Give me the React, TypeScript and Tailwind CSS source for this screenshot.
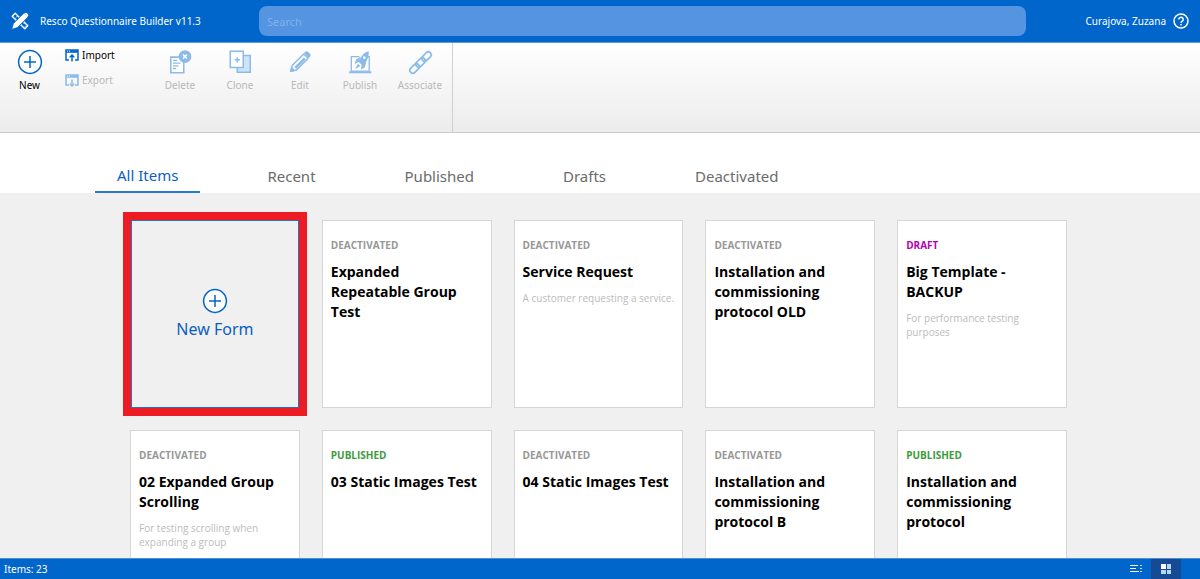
import type { ReactNode } from "react";
import { clsx } from "clsx";

type Status = "DEACTIVATED" | "DRAFT" | "PUBLISHED";

interface FormItem {
  status: Status;
  title: string;
  description?: string;
}

const TABS = ["All Items", "Recent", "Published", "Drafts", "Deactivated"];

const FORMS: FormItem[] = [
  { status: "DEACTIVATED", title: "Expanded Repeatable Group Test" },
  { status: "DEACTIVATED", title: "Service Request", description: "A customer requesting a service." },
  { status: "DEACTIVATED", title: "Installation and commissioning protocol OLD" },
  { status: "DRAFT", title: "Big Template - BACKUP", description: "For performance testing purposes" },
  {
    status: "DEACTIVATED",
    title: "02 Expanded Group Scrolling",
    description: "For testing scrolling when expanding a group",
  },
  { status: "PUBLISHED", title: "03 Static Images Test" },
  { status: "DEACTIVATED", title: "04 Static Images Test" },
  { status: "DEACTIVATED", title: "Installation and commissioning protocol B" },
  { status: "PUBLISHED", title: "Installation and commissioning protocol" },
];

const STATUS_COLORS: Record<Status, string> = {
  DEACTIVATED: "text-[#979797]",
  DRAFT: "text-[#b800b0]",
  PUBLISHED: "text-[#3c9a3c]",
};

function LogoIcon() {
  return (
    <svg width="18" height="18" viewBox="0 0 18 18" fill="none" aria-hidden="true">
      <path d="M4.2 1.2 1.2 4.2l12.6 12.6 3-3z" stroke="#fff" strokeWidth="1.4" strokeLinejoin="round" />
      <path d="m5.6 4.8 1-1M4 6.6l1-1M12.6 12l1-1M14 14.6l1-1" stroke="#fff" />
      <path d="M13 1 2.4 11.6.6 17.4l5.8-1.800L17 5z" fill="#fff" stroke="#0066cc" strokeWidth="0.8" />
      <path d="M13.2 1.4a2.500 2.500 0 0 1 3.500 3.500z" fill="#fff" />
    </svg>
  );
}

function HelpIcon() {
  return (
    <svg width="16" height="16" viewBox="0 0 16 16" fill="none" stroke="#fff" aria-hidden="true">
      <circle cx="8" cy="8" r="7" strokeWidth="1.5" />
      <path d="M5.8 6.4a2.2 2.2 0 1 1 3.5 1.8C8.5 8.8 8 9.2 8 10" strokeWidth="1.5" />
      <path d="M8 11v1.6" strokeWidth="1.5" />
    </svg>
  );
}

function PlusCircleIcon() {
  return (
    <svg width="26" height="26" viewBox="0 0 26 26" fill="none" stroke="#0066cc" aria-hidden="true">
      <circle cx="13" cy="13" r="11.4" strokeWidth="1.5" fill="#fff" />
      <path d="M13 7v12M7 13h12" strokeWidth="1.5" />
    </svg>
  );
}

function TransferIcon({ down = false }: { down?: boolean }) {
  const color = down ? "#8bbbea" : "#0066cc";
  return (
    <svg width="14" height="13" viewBox="0 0 14 13" fill="none" stroke={color} aria-hidden="true">
      <path d="M4 11H1V1h12v10h-3" strokeWidth="1.5" />
      <path d="M1 2.5h12" strokeWidth="2.6" />
      <path d="M2 2.2h1M4 2.2h1" stroke="#fff" strokeWidth="0.9" />
      {down ? (
        <path d="M7 5.5V12M4.8 9.8 7 12l2.2-2.2" strokeWidth="1.5" />
      ) : (
        <path d="M7 12.5V6M4.8 8.2 7 6l2.2 2.2" strokeWidth="1.5" />
      )}
    </svg>
  );
}

function RibbonIcon({ children }: { children: ReactNode }) {
  return (
    <svg width="26" height="26" viewBox="0 0 24 24" fill="none" stroke="#8bbbea" strokeWidth="1.4" aria-hidden="true">
      {children}
    </svg>
  );
}

const RIBBON_ACTIONS = [
  {
    label: "Delete",
    icon: (
      <>
        <path d="M3.5 7.5h12V22h-12z" fill="#fff" />
        <path d="M5.5 10.5h4M5.5 13h7M5.5 15.5h5M5.5 18h3" strokeWidth="1.2" />
        <circle cx="16.6" cy="7" r="5.2" fill="#8bbbea" />
        <path d="m14.8 5.2 3.6 3.6m0-3.6-3.6 3.6" stroke="#fff" strokeWidth="1.5" />
      </>
    ),
  },
  {
    label: "Clone",
    icon: (
      <>
        <path d="M9.5 6h12v15.5h-12z" fill="#cfe3f7" />
        <path d="M3 2h12v15H3z" fill="#fff" />
        <path d="M9.5 7.5v5M7 10h5" />
      </>
    ),
  },
  {
    label: "Edit",
    icon: (
      <>
        <path d="m3.500 20.500 1.300-5.200L15.500 4.600l4 4L8.800 19.300z" fill="#fff" strokeLinejoin="round" />
        <path d="m6.800 16.600 8.800-8.800 1.700 1.700-8.800 8.800z" fill="#8bbbea" stroke="none" />
        <path d="m3.500 20.500.8-3 2.200 2.200z" fill="#8bbbea" />
        <path d="m15.600 3.800 1.600-1.400q1.200-.8 2.200.1l2 2q.9 1 .1 2.200l-1.400 1.600z" fill="#8bbbea" stroke="none" />
      </>
    ),
  },
  {
    label: "Publish",
    icon: (
      <>
        <path d="M11.5 7H4v13.500h16.500V7h-2" fill="#fff" strokeWidth="1.2" />
        <path d="M2 21.500h20.500" strokeWidth="1.8" />
        <path d="M20 2c-4 .8-7.500 4.800-9.300 10l3.600 3.200C18 12.500 20.500 7.500 20 2z" fill="#8bbbea" stroke="none" />
        <path d="m12.600 7.200-4.200 2.500L7 14l4-2.200zM18 11.600l-1.600 5.200-3.500 2.400.6-4.700zM10 13.500l2.300 2.200-4.800 3z" fill="#8bbbea" stroke="none" />
        <circle cx="16" cy="8" r="1.2" fill="#fff" stroke="none" />
      </>
    ),
  },
  {
    label: "Associate",
    icon: (
      <g strokeWidth="1.6">
        <rect x="-5" y="-2.7" width="10" height="5.4" rx="2.7" transform="translate(7 18) rotate(-45)" />
        <rect x="-5" y="-2.7" width="10" height="5.4" rx="2.7" transform="translate(12.500 12.500) rotate(-45)" />
        <rect x="-5" y="-2.7" width="10" height="5.4" rx="2.7" transform="translate(18 7) rotate(-45)" />
      </g>
    ),
  },
];

function Header() {
  return (
    <header className="flex h-[43px] shrink-0 items-center border-b border-[#5b9ee0] bg-[#0066cc] text-white">
      <div className="flex w-[259px] shrink-0 items-center gap-[11px] pl-[11px]">
        <LogoIcon />
        <h1 className="text-[10px] whitespace-nowrap">Resco Questionnaire Builder v11.3</h1>
      </div>
      <input
        type="search"
        aria-label="Search"
        placeholder="Search"
        className="h-[30px] min-w-0 flex-1 rounded-lg bg-[#5494e0] px-2 text-[11px] text-white outline-none placeholder:text-[#7fb2ee]"
      />
      <div className="flex w-[174px] shrink-0 items-center justify-end gap-[7px] pr-[11px]">
        <span className="text-[10px]">Curajova, Zuzana</span>
        <button type="button" aria-label="Help">
          <HelpIcon />
        </button>
      </div>
    </header>
  );
}

function Ribbon() {
  return (
    <div className="flex h-[90px] shrink-0 border-b border-[#cccccc] bg-linear-to-b from-white to-[#ececec] text-[10px]">
      <button type="button" className="flex w-[59px] flex-col items-center pt-1.5">
        <PlusCircleIcon />
        <span className="leading-5">New</span>
      </button>
      <div className="flex w-[91px] flex-col items-start gap-[9px] pt-1 pl-1.5">
        <button type="button" className="flex items-center gap-[3px] leading-4">
          <TransferIcon />
          Import
        </button>
        <button type="button" disabled className="flex items-center gap-[3px] leading-4 text-[#b8b8b8]">
          <TransferIcon down />
          Export
        </button>
      </div>
      <div className="flex border-r border-[#d0d0d0] pr-0.5">
        {RIBBON_ACTIONS.map(({ label, icon }) => (
          <button
            key={label}
            type="button"
            disabled
            className="flex w-[60px] flex-col items-center pt-1.5 text-[#b8b8b8]"
          >
            <RibbonIcon>{icon}</RibbonIcon>
            <span className="leading-5">{label}</span>
          </button>
        ))}
      </div>
    </div>
  );
}

function Tabs() {
  return (
    <nav className="flex h-[60px] shrink-0 items-end gap-[45px] bg-white pl-[95px]">
      {TABS.map((tab, index) => (
        <button
          key={tab}
          type="button"
          className={clsx(
            "border-b-2 px-[22px] text-[15px] leading-6 whitespace-nowrap",
            index === 0 ? "border-[#2b78d0] pb-1 text-[#0a5fbf]" : "border-transparent pb-[3px] text-[#6b6b6b]"
          )}
        >
          {tab}
        </button>
      ))}
    </nav>
  );
}

function FormCard({ status, title, description }: FormItem) {
  return (
    <article className="h-[188px] border border-[#d6d6d6] bg-white px-2 pt-4 font-['Open_Sans',sans-serif]">
      <p className={clsx("text-[10px] leading-4 font-bold", STATUS_COLORS[status])}>{status}</p>
      <h2 className="mt-[9px] pr-1 text-sm leading-5 font-bold text-black">{title}</h2>
      {description && <p className="mt-[9px] text-[10px] leading-[14px] text-[#bcbcbc]">{description}</p>}
    </article>
  );
}

function Footer() {
  return (
    <footer className="flex h-[21px] shrink-0 items-center border-t border-[#4b8fd8] bg-[#0066cc] pl-1 text-[10px] text-white">
      <span className="flex-1">Items: 23</span>
      <button type="button" aria-label="List view" className="flex h-5 w-[30px] items-center justify-center">
        <svg width="14" height="10" viewBox="0 0 14 10" stroke="#fff" aria-hidden="true">
          <path d="M1 1.5h8M1 4.5h6M1 7.5h9" />
          <path d="M11 1.5h2M11 4.5h2M11 7.5h2" opacity="0.8" />
        </svg>
      </button>
      <button
        type="button"
        aria-label="Tile view"
        className="mr-[19px] flex h-5 w-[30px] items-center justify-center bg-[#174a94]"
      >
        <svg width="12" height="12" viewBox="0 0 12 12" aria-hidden="true">
          <path d="M1 1h5v5H1z" fill="#fff" />
          <path d="M7 1h4v5H7zM1 7h5v4H1zM7 7h4v4H7z" fill="#b5d7f2" />
        </svg>
      </button>
    </footer>
  );
}

function App() {
  return (
    <div className="flex h-screen flex-col overflow-hidden bg-[#f0f0f0] font-['Noto_Sans','Open_Sans',sans-serif] text-black">
      <Header />
      <Ribbon />
      <Tabs />
      <main className="min-h-0 flex-1 overflow-hidden pt-[27px] pr-[133px] pl-[130px]">
        <div className="grid grid-cols-5 gap-[22px]">
          <button
            type="button"
            className="mx-px flex h-[188px] flex-col items-center justify-center border border-[#2472c8] text-base text-[#0a5fbf] outline-8 outline-[#ed1c24]"
          >
            <PlusCircleIcon />
            <span className="mt-[3px] leading-6">New Form</span>
          </button>
          {FORMS.map((form) => (
            <FormCard key={form.title} {...form} />
          ))}
        </div>
      </main>
      <Footer />
    </div>
  );
}

export default App;
